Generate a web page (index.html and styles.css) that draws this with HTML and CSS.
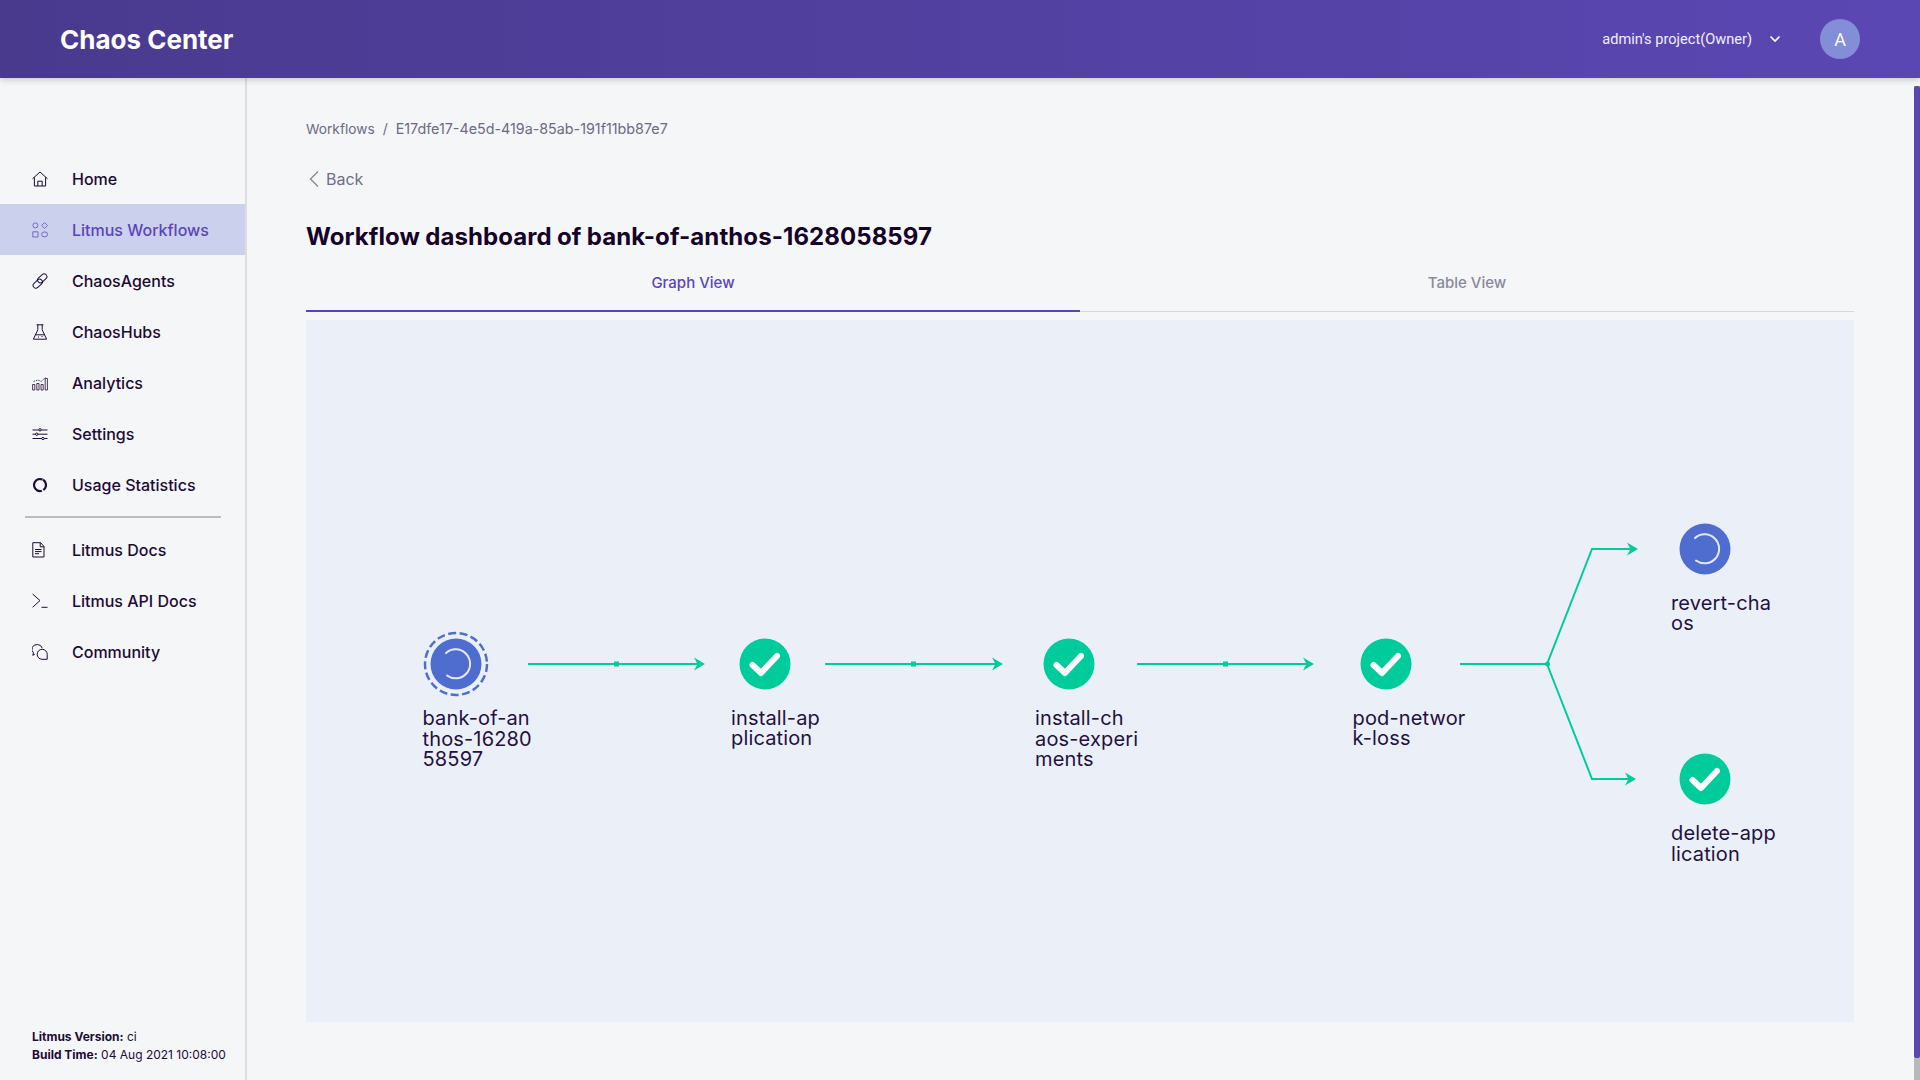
FILE: index.html
```html
<!DOCTYPE html>
<html lang="en">
  <head>
    <meta charset="UTF-8" />
    <meta name="viewport" content="width=device-width, initial-scale=1.0" />
    <title>Chaos Center</title>
    <link rel="stylesheet" href="styles.css">
  </head>
  <body>
    <header class="topbar">
      <div class="brand">Chaos Center</div>
      <div class="project">
        <span class="projectName">admin's project(Owner)</span>
        <svg class="chevron" width="12" height="8" viewBox="0 0 12 8"><path d="M1.5 1.5 6 6l4.500-4.500" fill="none" stroke="#fff" stroke-width="1.6"/></svg>
        <div class="avatar">A</div>
      </div>
    </header>

    <div class="layout">
      <aside class="sidebar">
        <nav class="nav">
          <a class="navItem">
            <svg class="navIcon" viewBox="0 0 16 16"><path d="M.5 7.800 8 1l7.500 6.800M2.400 6.200V15h11.200V6.200M5.800 15v-4.800h4.400V15"/></svg>
            Home
          </a>
          <a class="navItem active">
            <svg class="navIcon" viewBox="0 0 16 16"><circle cx="3.400" cy="3.400" r="2.500"/><path d="M12.600.6l2.900 2.900-2.900 2.900-2.900-2.900z"/><path d="M.8 9.800h5.200V15H.8z"/><ellipse cx="12.600" cy="12.400" rx="3" ry="2.500"/></svg>
            Litmus Workflows
          </a>
          <a class="navItem">
            <svg class="navIcon" viewBox="0 0 16 16"><rect x="5" y="2.500" width="10.500" height="5.600" rx="2.800" transform="rotate(-42 10.250 5.300)"/><rect x=".5" y="7.900" width="10.500" height="5.600" rx="2.800" transform="rotate(-42 5.750 10.700)"/></svg>
            ChaosAgents
          </a>
          <a class="navItem">
            <svg class="navIcon" viewBox="0 0 16 16"><path d="M4.600.8h6.800M5.800.8v5L1.400 15.200h13.200L10.200 5.800V.8M3.800 10.800h8.400"/><path class="thick" d="M6 13h1M9.500 12.500h1"/></svg>
            ChaosHubs
          </a>
          <a class="navItem">
            <svg class="navIcon" viewBox="0 0 16 16"><path class="thin" d="M.6 9.500h2.200V15H.6zM4.800 8.500H7V15H4.800zM9 9.500h2.200V15H9zM13.200 3.500h2.200V15h-2.200z"/><path class="thin" d="M1.600 6.500 5.800 5l3.400 1.500 5-4.500" stroke-dasharray="1.500 1"/></svg>
            Analytics
          </a>
          <a class="navItem">
            <svg class="navIcon" viewBox="0 0 16 16"><path d="M.5 4h6.300M9.200 4h6.300M.5 8.200h2.900M6 8.200h9.500M.5 12.500h9.300M12.300 12.500h3.200"/><circle cx="8" cy="3.800" r="1.200"/><circle cx="4.700" cy="8.200" r="1.200"/><circle cx="11" cy="12.500" r="1.200"/></svg>
            Settings
          </a>
          <a class="navItem">
            <svg class="navIcon" viewBox="0 0 16 16"><circle class="heavy" cx="8" cy="8" r="6" stroke-dasharray="12 1.500 22.700 1.500" transform="rotate(-60 8 8)"/></svg>
            Usage Statistics
          </a>
          <div class="navDivider"></div>
          <a class="navItem">
            <svg class="navIcon" viewBox="0 0 16 16"><path d="M.8.700h7.800L12 4.400V15H.8zM8.200.7v4.100H12M3 7.500h6.500M3 9.600h6.500M3 11.700h4"/></svg>
            Litmus Docs
          </a>
          <a class="navItem">
            <svg class="navIcon" viewBox="0 0 16 16"><path d="M.6 1 8 7.600.6 14.300M9.500 14.300h6"/></svg>
            Litmus API Docs
          </a>
          <a class="navItem">
            <svg class="navIcon" viewBox="0 0 16 16"><path d="M2.800 10.300.8 11.300l.7-2.400A4.800 4.800 0 0 1 5.500.6a4.800 4.800 0 0 1 4.700 3.600"/><path d="M15.200 15.300H10a5 5 0 1 1 5.200-5z"/></svg>
            Community
          </a>
        </nav>
        <div class="buildInfo">
          <div><b>Litmus Version:</b> ci</div>
          <div><b>Build Time:</b> 04 Aug 2021 10:08:00</div>
        </div>
      </aside>

      <main class="content">
        <div class="breadcrumb">
          <span class="crumbRoot">Workflows</span><span class="slash">/</span><span class="crumbId">E17dfe17-4e5d-419a-85ab-191f11bb87e7</span>
        </div>
        <div class="back">
          <svg width="12" height="18" viewBox="0 0 12 18"><path d="M10 1.500 2.500 9l7.500 7.500" fill="none" stroke="#8a8a96" stroke-width="1.400"/></svg>
          Back
        </div>
        <h1 class="title">Workflow dashboard of bank-of-anthos-1628058597</h1>
        <div class="tabs">
          <div class="tab selected">Graph View</div>
          <div class="tab">Table View</div>
        </div>

        <svg class="graph" width="1548" height="702" viewBox="306 320 1548 702">
          <defs>
            <g id="check">
              <circle r="25.500" fill="#00cc9b"/>
              <path d="M-12.500 1 -4 9 12 -8" fill="none" stroke="#fff" stroke-width="6" stroke-linecap="round" stroke-linejoin="round"/>
            </g>
            <g id="running">
              <circle r="25.500" fill="#4e6dcf"/>
              <path d="M-10 -11A14.500 14.500 0 1 1 -9 11.500" fill="none" stroke="#e4e8f8" stroke-width="2" stroke-linecap="round"/>
            </g>
            <path id="arrow" d="M-11 -6.500 0 0-11 6.500-7.500 0z"/>
          </defs>

          <g class="edge">
            <path d="M528 664H700"/>
            <path d="M825 664H998"/>
            <path d="M1137 664H1309"/>
            <path d="M1460 664H1547L1592 549H1633"/>
            <path d="M1547 664 1592 779H1631"/>
          </g>
          <g class="edgeDot">
            <rect x="614" y="661.500" width="5" height="5"/>
            <rect x="911" y="661.500" width="5" height="5"/>
            <rect x="1223" y="661.500" width="5" height="5"/>
            <circle cx="1547.500" cy="664" r="2.500"/>
            <use href="#arrow" x="705" y="664"/>
            <use href="#arrow" x="1003" y="664"/>
            <use href="#arrow" x="1314" y="664"/>
            <use href="#arrow" x="1638" y="549"/>
            <use href="#arrow" x="1636" y="779"/>
          </g>

          <circle cx="456" cy="664" r="31" fill="none" stroke="#4e6dcf" stroke-width="2.500" stroke-dasharray="8 3.500"/>
          <use href="#running" x="456" y="664"/>
          <use href="#check" x="765" y="664"/>
          <use href="#check" x="1069" y="664"/>
          <use href="#check" x="1386" y="664"/>
          <use href="#running" x="1705" y="549"/>
          <use href="#check" x="1705" y="779"/>

          <text class="nodeLabel"><tspan x="422.500" y="725">bank-of-an</tspan><tspan x="422.500" y="745.500">thos-16280</tspan><tspan x="422.500" y="766">58597</tspan></text>
          <text class="nodeLabel"><tspan x="731" y="725">install-ap</tspan><tspan x="731" y="745">plication</tspan></text>
          <text class="nodeLabel"><tspan x="1035" y="725">install-ch</tspan><tspan x="1035" y="745.500">aos-experi</tspan><tspan x="1035" y="766">ments</tspan></text>
          <text class="nodeLabel"><tspan x="1352.500" y="725">pod-networ</tspan><tspan x="1352.500" y="745">k-loss</tspan></text>
          <text class="nodeLabel"><tspan x="1671" y="610">revert-cha</tspan><tspan x="1671" y="629.500">os</tspan></text>
          <text class="nodeLabel"><tspan x="1671" y="840">delete-app</tspan><tspan x="1671" y="861">lication</tspan></text>
        </svg>
      </main>
    </div>

    <div class="scrollTrack"><div class="scrollThumb"></div></div>
  </body>
</html>
```

FILE: styles.css
```css
* {
  margin: 0;
  padding: 0;
  box-sizing: border-box;
}

html,
body {
  height: 100%;
  overflow: hidden;
}

body {
  display: flex;
  flex-direction: column;
  background: #f5f6f8;
  color: #1c0b33;
  font-family: Inter, "Liberation Sans", sans-serif;
}

.topbar {
  height: 78px;
  flex: none;
  display: flex;
  align-items: center;
  justify-content: space-between;
  padding: 0 60px;
  background: linear-gradient(90deg, #4a3a8e, #5b47b3);
  color: #fff;
  box-shadow: 0 2px 6px rgba(0, 0, 0, 0.18);
  position: relative;
  z-index: 1;
}

.brand {
  font-size: 26px;
  font-weight: 700;
}

.project {
  display: flex;
  align-items: center;
}

.projectName {
  font-family: Roboto, sans-serif;
  font-size: 14.6px;
  color: #f0eefa;
}

.chevron {
  margin-left: 17px;
  margin-right: 39px;
}

.avatar {
  width: 40px;
  height: 40px;
  border-radius: 50%;
  background: #838dd8;
  display: grid;
  place-items: center;
  font-family: Roboto, sans-serif;
  font-size: 18px;
}

.layout {
  flex: 1;
  display: flex;
  min-height: 0;
}

.sidebar {
  width: 247px;
  flex: none;
  display: flex;
  flex-direction: column;
  border-right: 2px solid #dcdde0;
  padding-top: 75px;
}

.navItem {
  height: 51px;
  display: flex;
  align-items: center;
  padding-left: 32px;
  font-size: 16px;
  font-weight: 500;
}

.navItem.active {
  background: #cbd0ec;
  color: #5b44ba;
}

.navIcon {
  width: 16px;
  height: 16px;
  margin-right: 24px;
  fill: none;
  stroke: currentColor;
  stroke-width: 1;
  flex: none;
}

.navIcon .heavy {
  stroke-width: 2.2;
}

.navIcon .thin {
  stroke-width: 0.8;
}

.navIcon .thick {
  stroke-width: 1.2;
}

.navItem.active .navIcon {
  stroke: #7767c8;
}

.navDivider {
  height: 2px;
  margin: 6px 24px 6px 25px;
  background: #bbbcc0;
}

.buildInfo {
  margin-top: auto;
  padding: 0 0 16px 32px;
  font-size: 12px;
  line-height: 18px;
}

.buildInfo b {
  font-weight: 700;
}

.content {
  flex: 1;
  padding: 41px 66px 0 59px;
}

.breadcrumb {
  font-size: 14px;
  line-height: 20px;
  color: #6b6b82;
}

.crumbRoot {
  font-size: 13.7px;
}

.crumbId {
  font-size: 14.3px;
}

.slash {
  margin: 0 8px;
}

.back {
  display: flex;
  align-items: center;
  gap: 6px;
  margin: 30px 0 0 2px;
  height: 20px;
  font-size: 16px;
  color: #6f7086;
}

.title {
  margin-top: 33px;
  font-size: 24px;
  line-height: 30px;
  font-weight: 700;
  letter-spacing: 0.08px;
  word-spacing: -0.5px;
  color: #150328;
}

.tabs {
  display: flex;
}

.tab {
  flex: 1;
  height: 60px;
  display: flex;
  align-items: center;
  justify-content: center;
  padding-top: 2px;
  font-size: 15px;
  font-weight: 500;
  color: #88899a;
  border-bottom: 1px solid #d6d7da;
}

.tab.selected {
  padding-top: 3px;
  color: #5b44ba;
  border-bottom: 2px solid #5b44ba;
}

.graph {
  display: block;
  margin-top: 8px;
  background: #ebf0f8;
}

.edge path {
  fill: none;
  stroke: #00cc9b;
  stroke-width: 2;
}

.edgeDot {
  fill: #00cc9b;
}

.nodeLabel {
  font-family: Inter, sans-serif;
  font-size: 20px;
  letter-spacing: 0.15px;
  fill: #24113d;
}

.scrollTrack {
  position: absolute;
  top: 86px;
  right: 0;
  bottom: 0;
  width: 6px;
  background: #b8b8b8;
}

.scrollThumb {
  height: 972px;
  background: #5b47b3;
  border-radius: 2px;
}
```
